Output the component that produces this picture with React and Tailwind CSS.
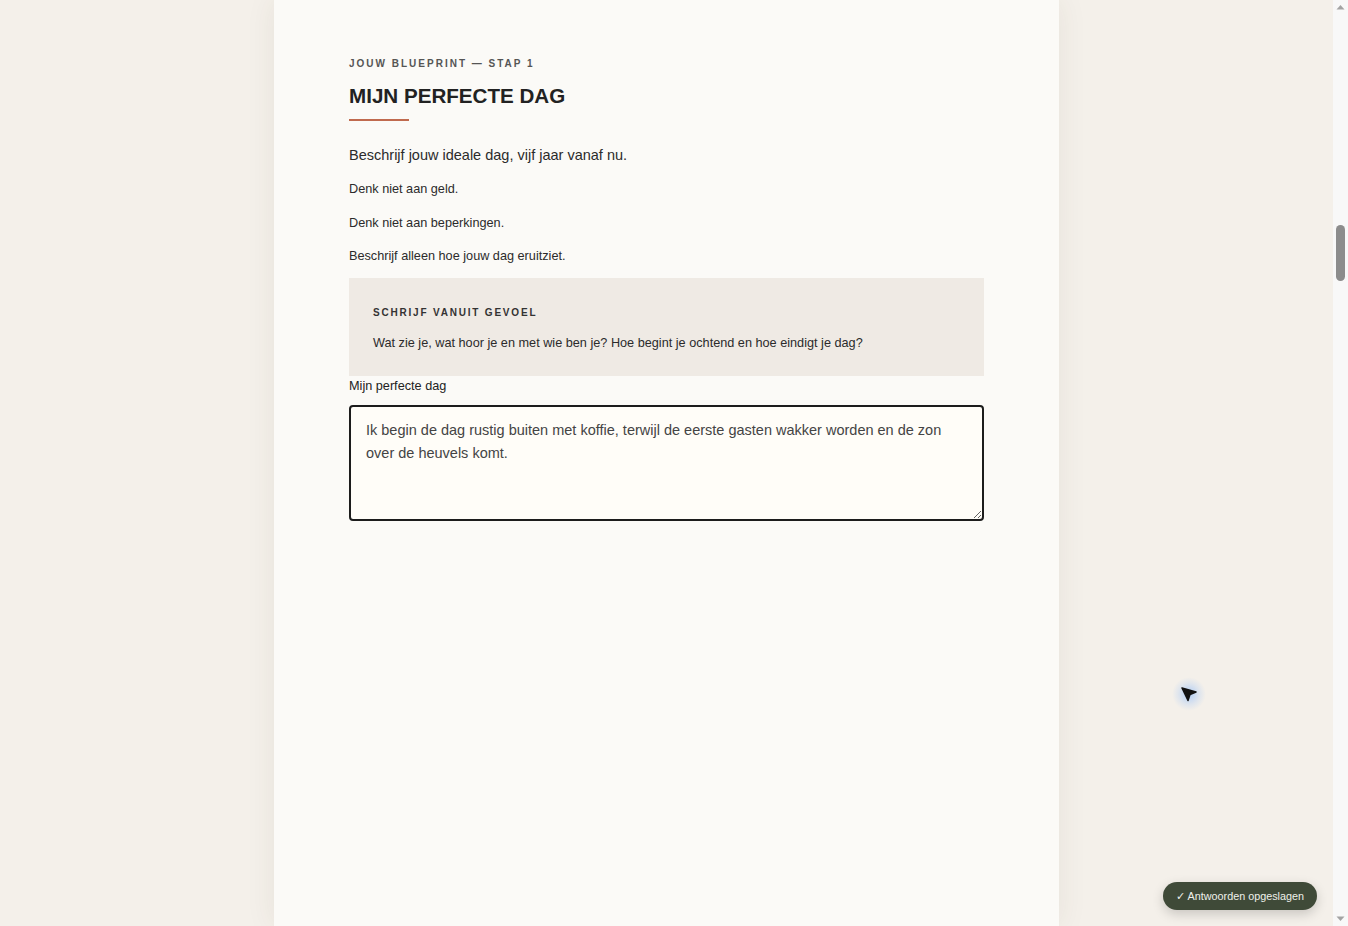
import React, { useLayoutEffect, useRef } from 'react';

const ScrollBar = () => (
  <div className="flex h-screen w-[15px] shrink-0 flex-col items-center bg-[#f8f8f8]">
    <svg viewBox="0 0 15 15" className="h-[15px] w-[15px] shrink-0">
      <path d="M3.5 9.5 L7.5 5 L11.5 9.5 Z" fill="#a3a3a3" />
    </svg>
    <div className="flex w-full flex-1 flex-col items-center">
      <div className="h-[210px] shrink-0" />
      <div className="h-[56px] w-[9px] rounded-full bg-[#8c8c8c]" />
    </div>
    <svg viewBox="0 0 15 15" className="h-[15px] w-[15px] shrink-0">
      <path d="M3.5 5.5 L7.5 10 L11.5 5.5 Z" fill="#a3a3a3" />
    </svg>
  </div>
);

const App = () => {
  const areaRef = useRef(null);

  useLayoutEffect(() => {
    const el = areaRef.current;
    if (el) {
      el.focus({ preventScroll: true });
      const len = el.value.length;
      el.setSelectionRange(len, len);
    }
  }, []);

  return (
    <div className="flex h-screen overflow-hidden bg-[#f4f0ea] font-['Liberation_Sans',Arial,sans-serif] text-[#222]">
      <main className="relative h-screen flex-1 overflow-hidden">
        <div className="mx-auto h-full w-[785px] bg-[#fbfaf7] shadow-[0_0_28px_rgba(80,60,40,0.08)]">
          <section className="px-[75px] pt-[56px]">
            <p className="text-[10px] leading-[15px] font-bold tracking-[0.2em] text-[#555]">
              JOUW BLUEPRINT — STAP 1
            </p>
            <h2 className="mt-[13px] text-[20.6px] leading-[24px] font-bold text-[#222]">
              MIJN PERFECTE DAG
            </h2>
            <div className="mt-[11px] h-[2px] w-[60px] bg-[#c06a4e]" />

            <p className="mt-[23px] text-[14.5px] leading-[22px] text-[#2b2b2b]">
              Beschrijf jouw ideale dag, vijf jaar vanaf nu.
            </p>
            <p className="mt-[13px] text-[12.7px] leading-[20px] text-[#2b2b2b]">Denk niet aan geld.</p>
            <p className="mt-[14px] text-[12.7px] leading-[20px] text-[#2b2b2b]">Denk niet aan beperkingen.</p>
            <p className="mt-[13px] text-[12.7px] leading-[20px] text-[#2b2b2b]">Beschrijf alleen hoe jouw dag eruitziet.</p>

            <div className="mt-[12px] bg-[#efeae4] px-[24px] pt-[27px] pb-[23px]">
              <p className="text-[10px] leading-[15px] font-bold tracking-[1.8px] text-[#333]">
                SCHRIJF VANUIT GEVOEL
              </p>
              <p className="mt-[13px] text-[12.7px] leading-[20px] text-[#2b2b2b]">
                Wat zie je, wat hoor je en met wie ben je? Hoe begint je ochtend en hoe eindigt je dag?
              </p>
            </div>

            <label className="block text-[12.7px] leading-[20px] text-[#222]">Mijn perfecte dag</label>
            <textarea
              ref={areaRef}
              defaultValue="Ik begin de dag rustig buiten met koffie, terwijl de eerste gasten wakker worden en de zon over de heuvels komt."
              className="mt-[9px] block h-[116px] w-full rounded-[4px] border-2 border-[#1c1c1c] bg-[#fffdf8] px-[15px] pt-[12px] text-[14.5px] leading-[23px] text-[#444] caret-[#222] outline-none"
            />
          </section>
        </div>

        {/* pointer from the recording */}
        <div className="pointer-events-none absolute left-[1172px] top-[677px] h-[34px] w-[34px] rounded-full bg-[radial-gradient(circle,rgba(110,170,255,0.5)_0%,rgba(110,170,255,0.15)_45%,rgba(110,170,255,0)_70%)]">
          <svg viewBox="0 0 34 34" className="h-[34px] w-[34px]">
            <path d="M10 11 L24 15 L18 17.5 L16 23.5 Z" fill="#111" stroke="#111" strokeWidth="1.5" strokeLinejoin="round" />
          </svg>
        </div>

        <div className="absolute bottom-[16px] right-[16px] flex h-[28px] items-center rounded-full bg-[#3f4a38] px-[13px] text-[10.8px] text-[#eef0ea] shadow-[0_4px_12px_rgba(0,0,0,0.18)]">
          ✓ Antwoorden opgeslagen
        </div>
      </main>

      <ScrollBar />
    </div>
  );
};

export default App;
